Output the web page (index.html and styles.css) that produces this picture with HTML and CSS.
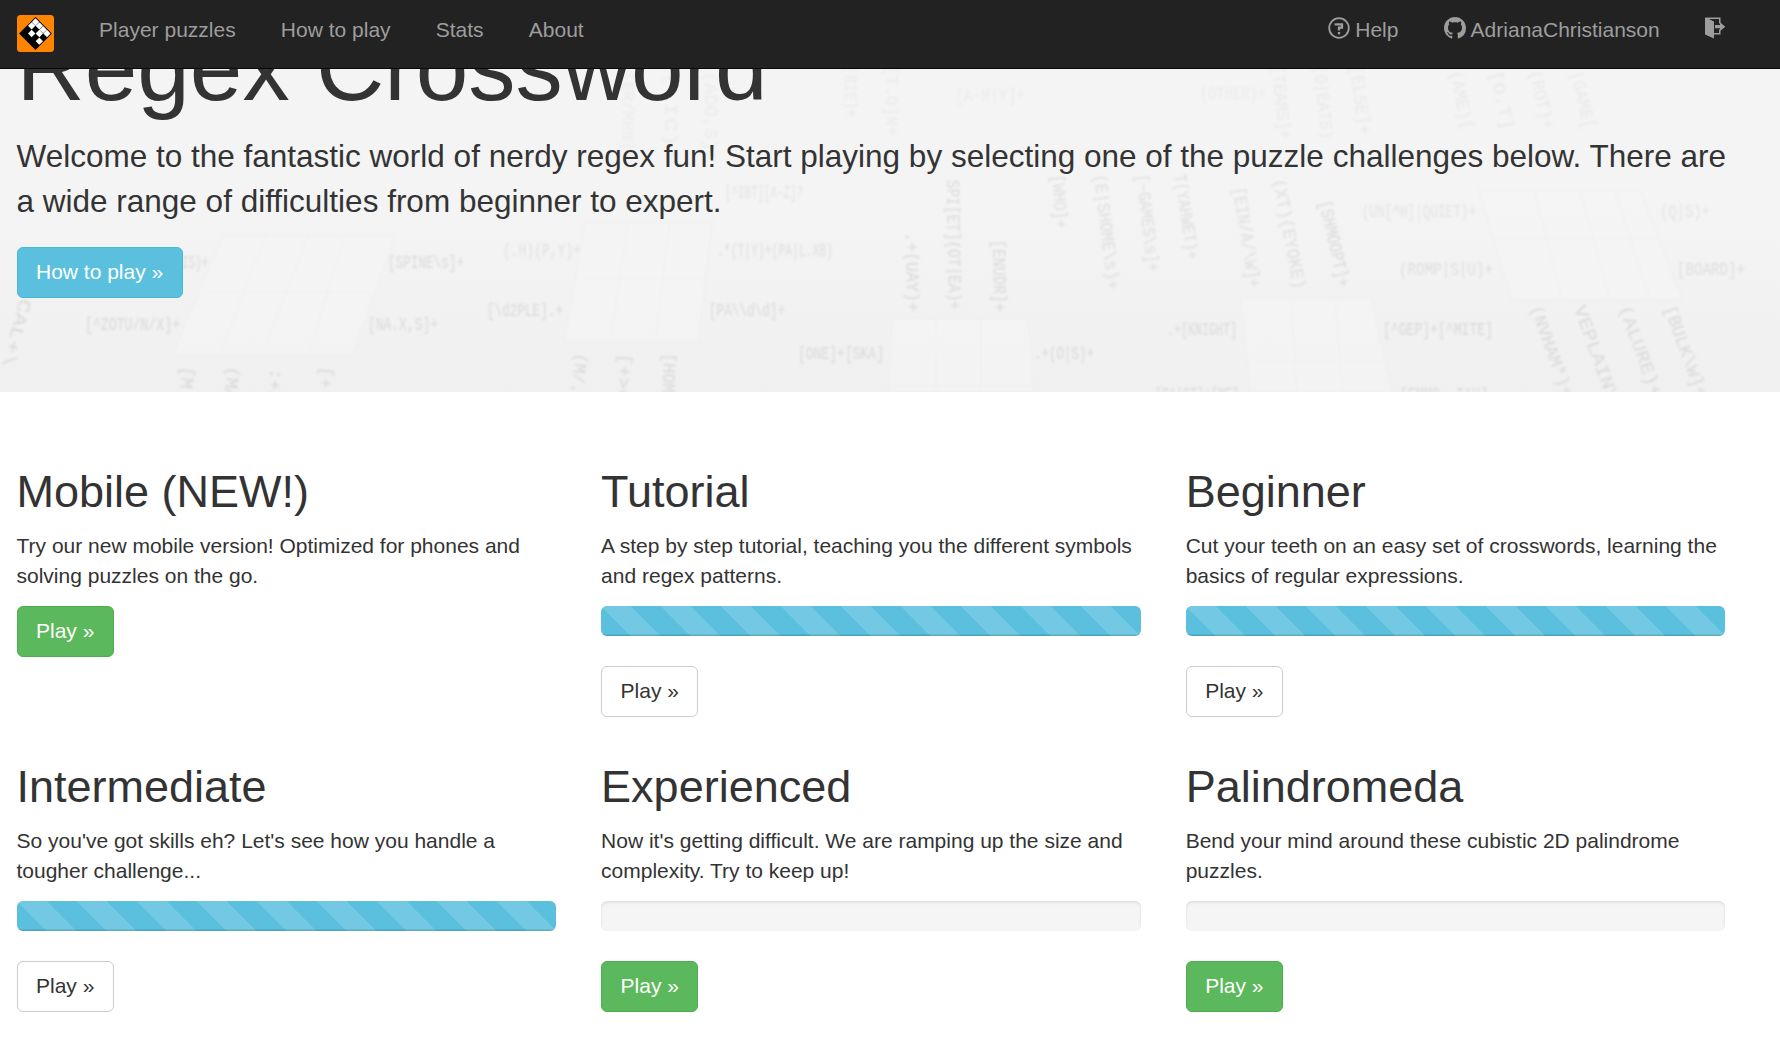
FILE: index.html
```html
<!DOCTYPE html>
<html lang="en">
<head>
<meta charset="utf-8">
<title>Regex Crossword</title>
<link rel="stylesheet" href="styles.css">
</head>
<body>
<header class="navbar">
  <div class="navbar-inner">
    <a class="brand" href="#" aria-label="Home">
      <svg width="37" height="37" viewBox="0 0 37 37">
        <rect width="37" height="37" rx="3.5" fill="#ff8400"/>
        <g transform="translate(18.5 2.1) rotate(45)">
          <rect width="23.2" height="23.2" fill="#000"/>
          <g fill="#fff">
            <rect x="0.9" y="0.9" width="5.2" height="5.2"/><rect x="6.3" y="0.9" width="5.2" height="5.200"/><rect x="11.7" y="0.9" width="5.2" height="5.2"/><rect x="17.1" y="0.9" width="5.2" height="5.2"/>
            <rect x="0.9" y="6.3" width="5.2" height="5.2"/><rect x="11.7" y="6.3" width="5.2" height="5.2"/>
            <rect x="6.3" y="11.7" width="5.2" height="5.2"/>
            <rect x="17.1" y="11.7" width="5.2" height="5.2"/>
          </g>
        </g>
      </svg>
    </a>
    <nav class="nav">
      <a href="#">Player puzzles</a>
      <a href="#">How to play</a>
      <a href="#">Stats</a>
      <a href="#">About</a>
    </nav>
    <nav class="nav nav-right">
      <a href="#"><svg class="icon" viewBox="0 0 22 22"><circle cx="11" cy="11" r="9.8" fill="none" stroke="currentColor" stroke-width="1.8"/><path d="M6.600 7.300h7.400v3.400h-3v2.900" fill="none" stroke="currentColor" stroke-width="2.3"/><rect x="9.800" y="15" width="2.4" height="2.3" fill="currentColor"/></svg>Help</a>
      <a href="#"><svg class="icon" viewBox="0 0 16 16"><path fill="currentColor" d="M8 0C3.58 0 0 3.58 0 8c0 3.54 2.29 6.53 5.47 7.59.4.07.55-.17.55-.38 0-.19-.01-.82-.01-1.49-2.01.37-2.53-.49-2.69-.94-.09-.23-.48-.94-.82-1.13-.28-.15-.68-.52-.01-.53.63-.01 1.08.58 1.23.82.72 1.21 1.87.87 2.33.66.07-.52.28-.87.51-1.07-1.78-.2-3.64-.89-3.64-3.95 0-.87.31-1.59.82-2.15-.08-.2-.36-1.02.08-2.12 0 0 .67-.21 2.2.82.64-.18 1.32-.27 2-.27s1.36.09 2 .27c1.53-1.04 2.2-.82 2.2-.82.44 1.1.16 1.92.08 2.12.51.56.82 1.27.82 2.15 0 3.07-1.87 3.75-3.65 3.95.29.25.54.73.54 1.48 0 1.07-.01 1.93-.01 2.2 0 .21.15.46.55.38A8.01 8.01 0 0 0 16 8c0-4.42-3.58-8-8-8z"/></svg>AdrianaChristianson</a>
      <a href="#" aria-label="Log out"><svg class="icon icon-exit" viewBox="0 0 21 22"><path d="M0 .5h15.500v6h-1.500v-4.500H4l5 2.500V16h5v-3.500h1.500V17.500H9V21.500L0 17.500z" fill="currentColor"/><path d="M10 8h5V5.300l5.300 4.400-5.300 4.300v-2.700h-5z" fill="currentColor"/></svg></a>
    </nav>
  </div>
</header>

<section class="hero">
  <svg class="hero-art" width="1780" height="392" viewBox="0 0 1780 392" aria-hidden="true">
    <g class="grids">
      <path d="M223 236H395L352 355H173zM203 292H370M308 236L262 355M345 236L308 355M265 236L220 355"/>
      <path d="M585 222H712L698 341H565zM575 279H706M628 222L610 341M670 222L655 341"/>
      <path d="M892 319H1028L1033 392H890zM892 386H1033M936 319V392M981 319V392"/>
      <path d="M1241 299H1371L1391 392H1251zM1246 361H1389M1291 299L1297 392M1335 299L1343 392"/>
      <path d="M1479 190H1640L1682 300H1512zM1495 238H1660M1534 190L1562 300M1580 190L1610 300M1615 190L1650 300"/>
    </g>
    <g class="clues">
      <text x="85" y="330" textLength="95" lengthAdjust="spacingAndGlyphs">[^ZOTU/N/X]+</text>
      <text x="368" y="330" textLength="70" lengthAdjust="spacingAndGlyphs">[NA.X,S]+</text>
      <text x="388" y="268" textLength="76" lengthAdjust="spacingAndGlyphs">[SPINE\s]+</text>
      <text x="182" y="268" textLength="26" lengthAdjust="spacingAndGlyphs">IS)+</text>
      <text x="503" y="256" textLength="78" lengthAdjust="spacingAndGlyphs" opacity=".7">(.H)(P,Y)+</text>
      <text x="487" y="316" textLength="76" lengthAdjust="spacingAndGlyphs">[\d2PLE].+</text>
      <text x="725" y="198" textLength="78" lengthAdjust="spacingAndGlyphs" opacity=".6">[^IBT][A-Z]?</text>
      <text x="717" y="256" textLength="116" lengthAdjust="spacingAndGlyphs" opacity=".8">.*(T|Y)+(PA|L.XB)</text>
      <text x="709" y="316" textLength="76" lengthAdjust="spacingAndGlyphs">[PA\\d\d]+</text>
      <text x="798" y="359" textLength="86" lengthAdjust="spacingAndGlyphs">[ONE]+[SKA]</text>
      <text x="1034" y="359" textLength="60" lengthAdjust="spacingAndGlyphs">.+(O|S)+</text>
      <text x="1167" y="335" textLength="70" lengthAdjust="spacingAndGlyphs">.+[KNIGHT]</text>
      <text x="1383" y="335" textLength="110" lengthAdjust="spacingAndGlyphs">[^GEP]+[^MITE]</text>
      <text x="1362" y="217" textLength="114" lengthAdjust="spacingAndGlyphs" opacity=".6">(UN[^H]|QUIET)+</text>
      <text x="1660" y="217" textLength="50" lengthAdjust="spacingAndGlyphs" opacity=".6">(Q|S)+</text>
      <text x="1399" y="275" textLength="94" lengthAdjust="spacingAndGlyphs" opacity=".8">(ROMP|S|U)+</text>
      <text x="1677" y="275" textLength="68" lengthAdjust="spacingAndGlyphs" opacity=".8">[BOARD]+</text>
      <text x="1155" y="400" textLength="84" lengthAdjust="spacingAndGlyphs">[RA|ST]+[ME]</text>
      <text x="1400" y="400" textLength="88" lengthAdjust="spacingAndGlyphs">[EMMO.-IAH]</text>
      <text x="955" y="101" textLength="70" lengthAdjust="spacingAndGlyphs" opacity=".3">[A-M|Y]+</text>
      <text x="1200" y="99" textLength="66" lengthAdjust="spacingAndGlyphs" opacity=".3">(OTHER)+</text>
      <text transform="translate(906 232) rotate(89)" textLength="80" lengthAdjust="spacingAndGlyphs">.+(UAY)+</text>
      <text transform="translate(947 180) rotate(89)" textLength="130" lengthAdjust="spacingAndGlyphs">SPI[ET](OT|EA)+</text>
      <text transform="translate(993 240) rotate(89)" textLength="72" lengthAdjust="spacingAndGlyphs">[ENUDR]+</text>
      <text transform="translate(1052 175) rotate(86)" textLength="54" lengthAdjust="spacingAndGlyphs" opacity=".8">[WHO]+</text>
      <text transform="translate(1094 175) rotate(83)" textLength="116" lengthAdjust="spacingAndGlyphs" opacity=".8">(E|SHOME\s)+</text>
      <text transform="translate(1136 175) rotate(83)" textLength="98" lengthAdjust="spacingAndGlyphs" opacity=".8">[~GAMES\s]+</text>
      <text transform="translate(1174 175) rotate(81)" textLength="86" lengthAdjust="spacingAndGlyphs" opacity=".8">T(YAHWET)+</text>
      <text transform="translate(1233 188) rotate(81)" textLength="102" lengthAdjust="spacingAndGlyphs" opacity=".8">[EIN/A/\W]+</text>
      <text transform="translate(1273 180) rotate(79)" textLength="112" lengthAdjust="spacingAndGlyphs" opacity=".8">(XT)(EYOKE)</text>
      <text transform="translate(1319 202) rotate(77)" textLength="88" lengthAdjust="spacingAndGlyphs">[SHMOOPT]+</text>
      <text transform="translate(1530 308) rotate(70)" textLength="96" lengthAdjust="spacingAndGlyphs">(NVHAM*)+</text>
      <text transform="translate(1574 308) rotate(70)" textLength="100" lengthAdjust="spacingAndGlyphs">VEPLAINY</text>
      <text transform="translate(1619 308) rotate(70)" textLength="96" lengthAdjust="spacingAndGlyphs">(ALURE)+</text>
      <text transform="translate(1664 308) rotate(70)" textLength="96" lengthAdjust="spacingAndGlyphs">[BULK\W]+</text>
      <text transform="translate(664 353) rotate(92)" textLength="60" lengthAdjust="spacingAndGlyphs">[HOM]+</text>
      <text transform="translate(620 353) rotate(94)" textLength="60" lengthAdjust="spacingAndGlyphs">[+&gt;C]</text>
      <text transform="translate(576 353) rotate(97)" textLength="60" lengthAdjust="spacingAndGlyphs">(M/.T)</text>
      <text transform="translate(183 366) rotate(97)" textLength="44" lengthAdjust="spacingAndGlyphs">[M.A</text>
      <text transform="translate(228 366) rotate(97)" textLength="44" lengthAdjust="spacingAndGlyphs">(MA)</text>
      <text transform="translate(271 368) rotate(97)" textLength="44" lengthAdjust="spacingAndGlyphs">:+RI</text>
      <text transform="translate(322 366) rotate(97)" textLength="44" lengthAdjust="spacingAndGlyphs">[+.I</text>
      <text transform="translate(20 298) rotate(105)" textLength="70" lengthAdjust="spacingAndGlyphs">CAL+\</text>
      <text transform="translate(622 72) rotate(90)" textLength="88" lengthAdjust="spacingAndGlyphs" opacity=".3">[ER/MHN]+</text>
      <text transform="translate(665 72) rotate(90)" textLength="90" lengthAdjust="spacingAndGlyphs" opacity=".3">(LIC)*</text>
      <text transform="translate(705 72) rotate(90)" textLength="90" lengthAdjust="spacingAndGlyphs" opacity=".3">(ADO,S)+</text>
      <text transform="translate(845 66) rotate(90)" textLength="52" lengthAdjust="spacingAndGlyphs" opacity=".35">(RIE)+</text>
      <text transform="translate(886 66) rotate(90)" textLength="70" lengthAdjust="spacingAndGlyphs" opacity=".35">[T.O]N+</text>
      <text transform="translate(1272 66) rotate(84)" textLength="74" lengthAdjust="spacingAndGlyphs" opacity=".4">[TEAMS]+</text>
      <text transform="translate(1314 66) rotate(84)" textLength="74" lengthAdjust="spacingAndGlyphs" opacity=".4">(O|EATS)</text>
      <text transform="translate(1350 66) rotate(82)" textLength="70" lengthAdjust="spacingAndGlyphs" opacity=".4">[ELSE]+</text>
      <text transform="translate(1450 72) rotate(78)" textLength="60" lengthAdjust="spacingAndGlyphs" opacity=".4">(AME)[</text>
      <text transform="translate(1490 72) rotate(78)" textLength="60" lengthAdjust="spacingAndGlyphs" opacity=".4">[O.T]</text>
      <text transform="translate(1529 72) rotate(76)" textLength="60" lengthAdjust="spacingAndGlyphs" opacity=".4">(ROT)+</text>
      <text transform="translate(1570 72) rotate(76)" textLength="60" lengthAdjust="spacingAndGlyphs" opacity=".4">|GAME[</text>
    </g>
  </svg>
  <div class="container">
    <h1>Regex Crossword</h1>
    <p>Welcome to the fantastic world of nerdy regex fun! Start playing by selecting one of the puzzle challenges below. There are a wide range of difficulties from beginner to expert.</p>
    <a class="btn btn-info" href="#">How to play »</a>
  </div>
</section>

<main class="container challenges">
  <article>
    <h2>Mobile (NEW!)</h2>
    <p>Try our new mobile version! Optimized for phones and solving puzzles on the go.</p>
    <a class="btn btn-success" href="#">Play »</a>
  </article>
  <article>
    <h2>Tutorial</h2>
    <p>A step by step tutorial, teaching you the different symbols and regex patterns.</p>
    <div class="progress"><div class="bar"></div></div>
    <a class="btn" href="#">Play »</a>
  </article>
  <article>
    <h2>Beginner</h2>
    <p>Cut your teeth on an easy set of crosswords, learning the basics of regular expressions.</p>
    <div class="progress"><div class="bar"></div></div>
    <a class="btn" href="#">Play »</a>
  </article>
  <article>
    <h2>Intermediate</h2>
    <p>So you've got skills eh? Let's see how you handle a tougher challenge...</p>
    <div class="progress"><div class="bar"></div></div>
    <a class="btn" href="#">Play »</a>
  </article>
  <article>
    <h2>Experienced</h2>
    <p>Now it's getting difficult. We are ramping up the size and complexity. Try to keep up!</p>
    <div class="progress"></div>
    <a class="btn btn-success" href="#">Play »</a>
  </article>
  <article>
    <h2>Palindromeda</h2>
    <p>Bend your mind around these cubistic 2D palindrome puzzles.</p>
    <div class="progress"></div>
    <a class="btn btn-success" href="#">Play »</a>
  </article>
</main>
</body>
</html>
```
FILE: styles.css
```css
* { box-sizing: border-box; }

body {
  margin: 0;
  overflow: hidden;
  background: #fff;
  color: #333;
  font: 21px/30px "Liberation Sans", Arial, sans-serif;
}

a { color: inherit; text-decoration: none; }
h1, h2, p { margin: 0; }
h1, h2 { font-weight: 400; }

.navbar {
  position: fixed;
  top: 0;
  left: 0;
  right: 0;
  z-index: 10;
  height: 69px;
  background: #222;
  border-bottom: 1px solid #080808;
  color: #9d9d9d;
}

.navbar-inner {
  display: flex;
  width: 1748.5px;
  padding-left: 17px;
  padding-top: 15px;
}

.brand { height: 37px; margin-right: 22.5px; }
.brand svg { display: block; }
.nav { display: flex; }
.nav a { display: block; padding: 0 22.6px; white-space: nowrap; }
.nav-right { margin-left: auto; }

.icon {
  width: 22px;
  height: 22px;
  margin-right: 5px;
  vertical-align: -2px;
}

.icon-exit { width: 21px; margin-right: 0; }

.container { width: 1710px; margin-left: 16.5px; }

.hero {
  position: relative;
  height: 392px;
  padding-top: 19.5px;
  overflow: hidden;
  background: linear-gradient(#f4f4f4 0, #f4f4f4 50%, #f0f0f0 100%);
}

.hero .container { position: relative; }

.hero-art { position: absolute; left: 0; top: 0; filter: blur(1px); }

.grids path {
  fill: #f5f5f5;
  fill-opacity: .6;
  stroke: #efefef;
  stroke-width: 1.2;
}

.clues text {
  fill: #d9d9d9;
  font: 18px "Liberation Mono", monospace;
}

.hero h1 { margin-bottom: 19.5px; font-size: 94.5px; line-height: 94.5px; }
.hero p { margin-bottom: 23.5px; font-size: 31.5px; line-height: 45px; }

.btn {
  display: inline-block;
  height: 51px;
  padding: 9px 18.5px;
  border: 1px solid #ccc;
  border-radius: 6px;
  background: #fff;
  line-height: 30.5px;
}

.btn-info { background: #5bc0de; border-color: #46b8da; color: #fff; line-height: 29.5px; }
.btn-success { background: #5cb85c; border-color: #4cae4c; color: #fff; }

.challenges {
  display: grid;
  grid-template-columns: repeat(3, 539.5px);
  column-gap: 45.1px;
  padding-top: 74.5px;
}

.challenges article { height: 295px; }
.challenges h2 { margin-bottom: 15px; font-size: 45px; line-height: 49.5px; }
.challenges p { margin-bottom: 15px; }

.progress {
  height: 30px;
  margin-bottom: 30px;
  overflow: hidden;
  border-radius: 6px;
  background: #f5f5f5;
  box-shadow: inset 0 1.5px 3px rgba(0, 0, 0, .1);
}

.bar {
  height: 100%;
  background: #5bc0de linear-gradient(45deg, rgba(255, 255, 255, .15) 25%, transparent 25%, transparent 50%, rgba(255, 255, 255, .15) 50%, rgba(255, 255, 255, .15) 75%, transparent 75%) 0 0 / 60px 60px;
  box-shadow: inset 0 -1.5px 0 rgba(0, 0, 0, .15);
}
```
